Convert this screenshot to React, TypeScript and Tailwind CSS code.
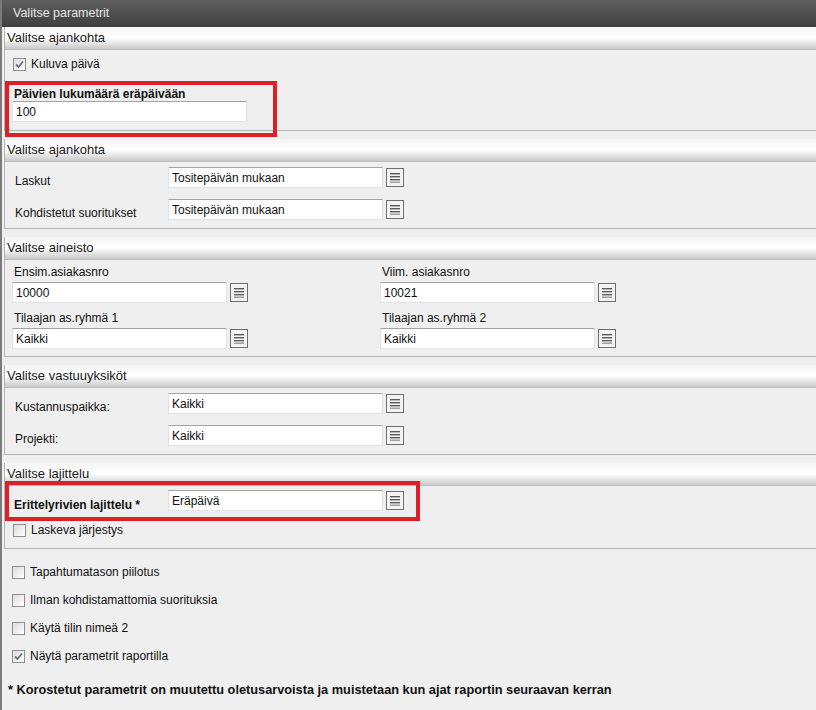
import React from "react";

const font = { fontFamily: '"Liberation Sans", Arial, sans-serif' };

function Check({ checked }: { checked?: boolean }) {
  return (
    <span className="flex h-[13px] w-[13px] shrink-0 items-center justify-center border border-[#8e8f8f] bg-linear-to-br from-[#dcdcdc] to-[#ffffff]">
      {checked && (
        <svg width="9" height="9" viewBox="0 0 9 9">
          <path d="M1 4.5 L3.5 7 L8 1.5" fill="none" stroke="#6b6f78" strokeWidth="1.8" />
        </svg>
      )}
    </span>
  );
}

function CheckRow({ label, checked }: { label: string; checked?: boolean }) {
  return (
    <div className="flex h-[14px] items-center gap-[5px] text-[12px] leading-[14px] text-[#111]">
      <Check checked={checked} />
      <span>{label}</span>
    </div>
  );
}

function MenuButton() {
  return (
    <span className="flex h-[19px] w-[18px] shrink-0 items-center justify-center border border-[#6f6f6f] bg-[#f3f3f3]">
      <svg width="12" height="11" viewBox="0 0 12 11">
        <rect x="1" y="1" width="10" height="1.4" fill="#5a5a5a" />
        <rect x="1" y="4" width="10" height="1.4" fill="#5a5a5a" />
        <rect x="1" y="7" width="10" height="1.4" fill="#5a5a5a" />
        <rect x="1" y="9.6" width="10" height="1.2" fill="#8a8a8a" />
      </svg>
    </span>
  );
}

function Field({ value, width }: { value: string; width: string }) {
  return (
    <div
      className={`flex h-[21px] items-center border border-[#e2e2e2] border-t-[#a3a3a3] bg-white pl-[3px] text-[12px] text-[#111] ${width}`}
    >
      {value}
    </div>
  );
}

function Picker({ value, width = "w-[215px]" }: { value: string; width?: string }) {
  return (
    <div className="flex items-center gap-[3px]">
      <Field value={value} width={width} />
      <MenuButton />
    </div>
  );
}

function Header({ title }: { title: string }) {
  return (
    <div className="flex h-[23px] items-center border-b border-[#bdbdbd] bg-linear-to-b from-[#f4f4f4] via-[#ffffff] to-[#c9c9c9] pl-[2px] text-[13px] text-[#1a1a1a]">
      {title}
    </div>
  );
}

function Section({ title, children }: { title: string; children: React.ReactNode }) {
  return (
    <div className="ml-[2px] border-b border-l border-[#b5b5b5]">
      <Header title={title} />
      {children}
    </div>
  );
}

function LabelRow({ label, value }: { label: string; value: string }) {
  return (
    <div className="flex h-[21px] items-center">
      <span className="w-[163px] pl-[10px] pt-[6px] text-[12px] text-[#111]">{label}</span>
      <Picker value={value} />
    </div>
  );
}

function Stacked({ label, value }: { label: string; value: string }) {
  return (
    <div className="flex flex-col">
      <span className="h-[14px] pl-[2px] text-[12px] leading-[14px] text-[#111]">{label}</span>
      <div className="mt-[3px]">
        <Picker value={value} />
      </div>
    </div>
  );
}

export default function App() {
  return (
    <div style={font} className="h-[710px] w-[816px] overflow-hidden border-l-[2px] border-[#7b7b7b] bg-[#efefef]">
      <div className="-ml-[2px] flex h-[27px] items-center bg-linear-to-b from-[#5f5f5f] to-[#3f3f3f] pl-[13px] text-[12.5px] text-[#e6e6e6]">
        Valitse parametrit
      </div>

      <Section title="Valitse ajankohta">
        <div className="pl-[8px] pt-[7px]">
          <CheckRow label="Kuluva päivä" checked />
        </div>
        <div className="relative z-10 mt-[10px] -mb-[7px] h-[56px] w-[272px] border-[4px] border-[#dd1f27] pl-[3px]">
          <div className="h-[14px] pl-[2px] pt-[2px] text-[12px] font-bold leading-[14px] text-[#111]">
            Päivien lukumäärä eräpäivään
          </div>
          <div className="mt-[2px]">
            <Field value="100" width="w-[235px]" />
          </div>
        </div>
      </Section>

      <div className="h-[8px]" />
      <Section title="Valitse ajankohta">
        <div className="flex flex-col gap-[11px] pb-[8px] pt-[5px]">
          <LabelRow label="Laskut" value="Tositepäivän mukaan" />
          <LabelRow label="Kohdistetut suoritukset" value="Tositepäivän mukaan" />
        </div>
      </Section>

      <div className="h-[8px]" />
      <Section title="Valitse aineisto">
        <div className="grid grid-cols-[368px_1fr] gap-y-[8px] pb-[7px] pl-[7px] pt-[5px]">
          <Stacked label="Ensim.asiakasnro" value="10000" />
          <Stacked label="Viim. asiakasnro" value="10021" />
          <Stacked label="Tilaajan as.ryhmä 1" value="Kaikki" />
          <Stacked label="Tilaajan as.ryhmä 2" value="Kaikki" />
        </div>
      </Section>

      <div className="h-[8px]" />
      <Section title="Valitse vastuuyksiköt">
        <div className="flex flex-col gap-[11px] pb-[8px] pt-[5px]">
          <LabelRow label="Kustannuspaikka:" value="Kaikki" />
          <LabelRow label="Projekti:" value="Kaikki" />
        </div>
      </Section>

      <div className="h-[8px]" />
      <Section title="Valitse lajittelu">
        <div className="relative z-10 -mt-[5px] flex h-[40px] w-[415px] items-start border-[4px] border-[#dd1f27] pt-[5px]">
          <span className="w-[159px] pl-[5px] pt-[6px] text-[12px] font-bold text-[#111]">
            Erittelyrivien lajittelu *
          </span>
          <Picker value="Eräpäivä" />
        </div>
        <div className="pb-[11px] pl-[8px] pt-[2px]">
          <CheckRow label="Laskeva järjestys" />
        </div>
      </Section>

      <div className="flex flex-col gap-[14px] pl-[10px] pt-[16px]">
        <CheckRow label="Tapahtumatason piilotus" />
        <CheckRow label="Ilman kohdistamattomia suorituksia" />
        <CheckRow label="Käytä tilin nimeä 2" />
        <CheckRow label="Näytä parametrit raportilla" checked />
      </div>

      <div className="pl-[6px] pt-[17px] text-[12.75px] font-bold text-[#111]">
        * Korostetut parametrit on muutettu oletusarvoista ja muistetaan kun ajat raportin seuraavan kerran
      </div>
    </div>
  );
}
